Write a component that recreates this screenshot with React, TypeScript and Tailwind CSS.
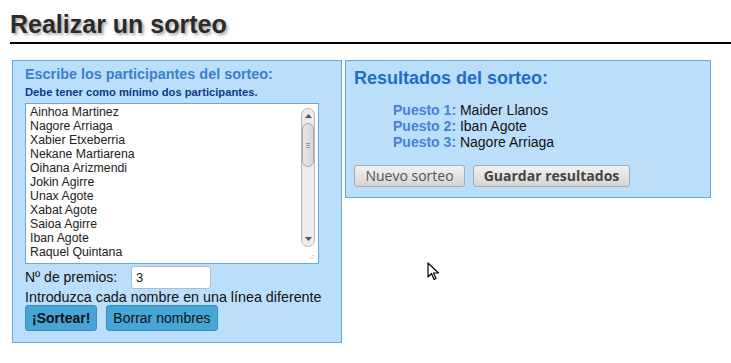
import React from 'react'

const names = [
  'Ainhoa Martinez',
  'Nagore Arriaga',
  'Xabier Etxeberria',
  'Nekane Martiarena',
  'Oihana Arizmendi',
  'Jokin Agirre',
  'Unax Agote',
  'Xabat Agote',
  'Saioa Agirre',
  'Iban Agote',
  'Raquel Quintana',
]

const results = ['Maider Llanos', 'Iban Agote', 'Nagore Arriaga']

function ScrollBar() {
  return (
    <div className="absolute right-[3px] top-[4px] w-[14px] h-[139px] rounded-[7px] border border-[#b8b8b8] bg-[#ececec] flex flex-col items-center">
      <div className="h-[14px] flex items-center justify-center">
        <svg width="7" height="4" viewBox="0 0 7 4"><path d="M0 4 L3.5 0 L7 4 Z" fill="#555" /></svg>
      </div>
      <div className="w-[12px] h-[44px] rounded-[6px] border border-[#a8a8a8] bg-gradient-to-r from-[#e8e8e8] to-[#d6d6d6] flex items-center justify-center">
        <div className="flex flex-col gap-[1px]">
          <div className="w-[4px] h-px bg-[#999]" />
          <div className="w-[4px] h-px bg-[#999]" />
          <div className="w-[4px] h-px bg-[#999]" />
        </div>
      </div>
      <div className="flex-1" />
      <div className="h-[14px] flex items-center justify-center">
        <svg width="7" height="4" viewBox="0 0 7 4"><path d="M0 0 L3.5 4 L7 0 Z" fill="#555" /></svg>
      </div>
    </div>
  )
}

export default function App() {
  return (
    <div className="relative w-[731px] h-[363px] bg-white font-['Liberation_Sans',Arial,sans-serif] overflow-hidden">
      <div className="pl-[10px] pt-[9px]">
        <h1 className="text-[25px] leading-[30px] font-bold text-[#2b2b2b] [text-shadow:2px_2px_3px_rgba(0,0,0,0.35)]">
          Realizar un sorteo
        </h1>
        <div className="h-[2px] bg-black mt-[3px]" />
      </div>

      <div className="flex items-start gap-[3px] pl-[12px] mt-[16px]">
        {/* left panel */}
        <div className="w-[330px] h-[283px] bg-[#bbdefb] border border-[#6aa6e0] pl-[12px] pt-[5px]">
          <div className="text-[14.4px] leading-[17px] font-bold text-[#3b7ed0]">Escribe los participantes del sorteo:</div>
          <div className="text-[11.2px] leading-[14px] font-bold text-[#0b3a8a] mt-[2px]">Debe tener como mínimo dos participantes.</div>
          <div className="relative w-[294px] h-[161px] bg-white border border-[#6aa6e0] mt-[4px] pl-[4px] pt-[1px]">
            {names.map((n) => (
              <div key={n} className="text-[12.3px] leading-[14px] text-[#222]">{n}</div>
            ))}
            <ScrollBar />
            <div className="absolute right-[4px] bottom-[2px] text-[8px] leading-[8px] text-[#777]">.:</div>
          </div>
          <div className="flex items-center mt-[1px] h-[24px] text-[14px] text-[#111]">
            <span className="w-[106px]">Nº de premios:</span>
            <div className="w-[80px] h-[23px] bg-white border border-[#bbb] rounded-[3px] pl-[4px] text-[13px] leading-[21px]">3</div>
          </div>
          <div className="text-[14.3px] leading-[17px] text-[#111]">Introduzca cada nombre en una línea diferente</div>
          <div className="flex gap-[9px] mt-[-1px]">
            <button className="h-[26px] px-[6px] rounded-[3px] bg-[#46a5d6] border border-[#3a8fc0] text-[14px] font-bold text-[#111]">¡Sortear!</button>
            <button className="h-[26px] px-[6px] rounded-[3px] bg-[#46a5d6] border border-[#3a8fc0] text-[14px] text-[#111]">Borrar nombres</button>
          </div>
        </div>

        {/* right panel */}
        <div className="w-[366px] h-[138px] bg-[#bbdefb] border border-[#6aa6e0] pl-[8px] pt-[6px]">
          <div className="text-[18px] leading-[22px] font-bold text-[#1f6dc6]">Resultados del sorteo:</div>
          <div className="pl-[39px] mt-[13px]">
            {results.map((r, i) => (
              <div key={r} className="text-[14px] leading-[16px] text-[#111]">
                <span className="font-bold text-[#4a80d8]">Puesto {i + 1}:</span> {r}
              </div>
            ))}
          </div>
          <div className="flex gap-[8px] mt-[15px] font-['Open_Sans',sans-serif]">
            <button className="h-[22px] w-[111px] rounded-[3px] border border-[#a9a9a9] bg-gradient-to-b from-[#f2f2f2] to-[#d4d4d4] text-[14px] leading-[20px] text-[#555]">Nuevo sorteo</button>
            <button className="h-[22px] w-[157px] rounded-[3px] border border-[#a9a9a9] bg-gradient-to-b from-[#f2f2f2] to-[#d4d4d4] text-[14px] leading-[20px] font-bold text-[#444]">Guardar resultados</button>
          </div>
        </div>
      </div>

      {/* mouse cursor */}
      <svg className="absolute left-[427px] top-[262px]" width="13" height="20" viewBox="0 0 13 20">
        <path d="M1 1 L1 15 L4.5 11.5 L7 17.5 L9 16.5 L6.5 11 L11.5 11 Z" fill="white" stroke="black" strokeWidth="1.2" strokeLinejoin="round" />
      </svg>
    </div>
  )
}
